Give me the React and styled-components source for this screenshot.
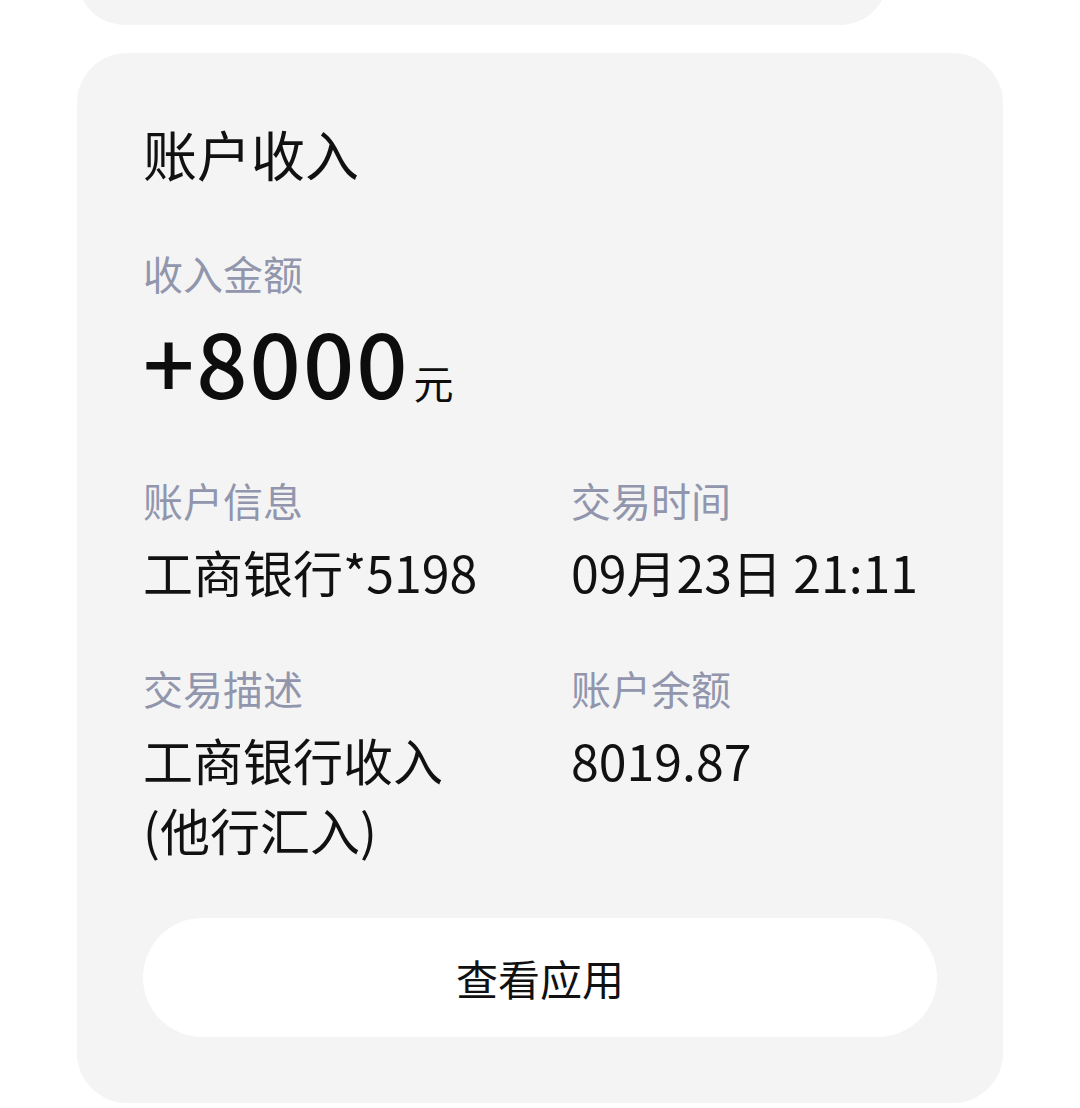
import styled, { createGlobalStyle } from "styled-components";

const GlobalStyle = createGlobalStyle`
  html, body {
    margin: 0;
    padding: 0;
    background: #ffffff;
  }
  body {
    font-family: "Noto Sans CJK SC", "Noto Sans", sans-serif;
    color: #111111;
  }
`;

const Page = styled.div`
  width: 1080px;
  height: 1108px;
  overflow: hidden;
  display: flex;
  flex-direction: column;
  padding-left: 77px;
  box-sizing: border-box;
`;

const PrevCard = styled.div`
  flex-shrink: 0;
  width: 811px;
  height: 100px;
  margin-top: -75px;
  background: #f4f4f4;
  border-radius: 48px;
`;

const Card = styled.section`
  flex-shrink: 0;
  width: 926px;
  margin-top: 28px;
  box-sizing: border-box;
  padding: 69px 66px 66px;
  background: #f4f4f4;
  border-radius: 50px;
  display: flex;
  flex-direction: column;
`;

const Title = styled.h2`
  margin: 0;
  font-size: 54px;
  line-height: 64px;
  font-weight: 400;
  color: #111;
`;

const Label = styled.div`
  font-size: 40px;
  line-height: 48px;
  color: #9196ad;
  margin-top: ${(p) => p.$top || 0}px;
`;

const Amount = styled.div`
  margin-top: 17px;
  display: flex;
  align-items: baseline;
  font-size: 90px;
  line-height: 92px;
  font-weight: 500;
  letter-spacing: 2px;
  color: #0d0d0d;
`;

const Unit = styled.span`
  font-size: 40px;
  font-weight: 400;
  letter-spacing: 0;
  margin-left: 4px;
`;

const InfoGrid = styled.div`
  display: grid;
  grid-template-columns: 428px 1fr;
  row-gap: 58px;
  margin-top: 48px;
`;

const Field = styled.div`
  display: flex;
  flex-direction: column;
`;

const Value = styled.div`
  margin-top: 12px;
  font-size: 50px;
  line-height: 70px;
  color: #111;
`;

const Button = styled.button`
  margin-top: 54px;
  height: 119px;
  border: none;
  border-radius: 60px;
  background: #ffffff;
  font-family: inherit;
  font-size: 42px;
  color: #111;
  cursor: pointer;
`;

export default function App() {
  return (
    <>
      <GlobalStyle />
      <Page>
        <PrevCard />
        <Card>
          <Title>账户收入</Title>
          <Label $top={63}>收入金额</Label>
          <Amount>
            +8000<Unit>元</Unit>
          </Amount>
          <InfoGrid>
            <Field>
              <Label>账户信息</Label>
              <Value>工商银行*5198</Value>
            </Field>
            <Field>
              <Label>交易时间</Label>
              <Value>09月23日 21:11</Value>
            </Field>
            <Field>
              <Label>交易描述</Label>
              <Value>
                工商银行收入
                <br />
                (他行汇入)
              </Value>
            </Field>
            <Field>
              <Label>账户余额</Label>
              <Value>8019.87</Value>
            </Field>
          </InfoGrid>
          <Button>查看应用</Button>
        </Card>
      </Page>
    </>
  );
}
